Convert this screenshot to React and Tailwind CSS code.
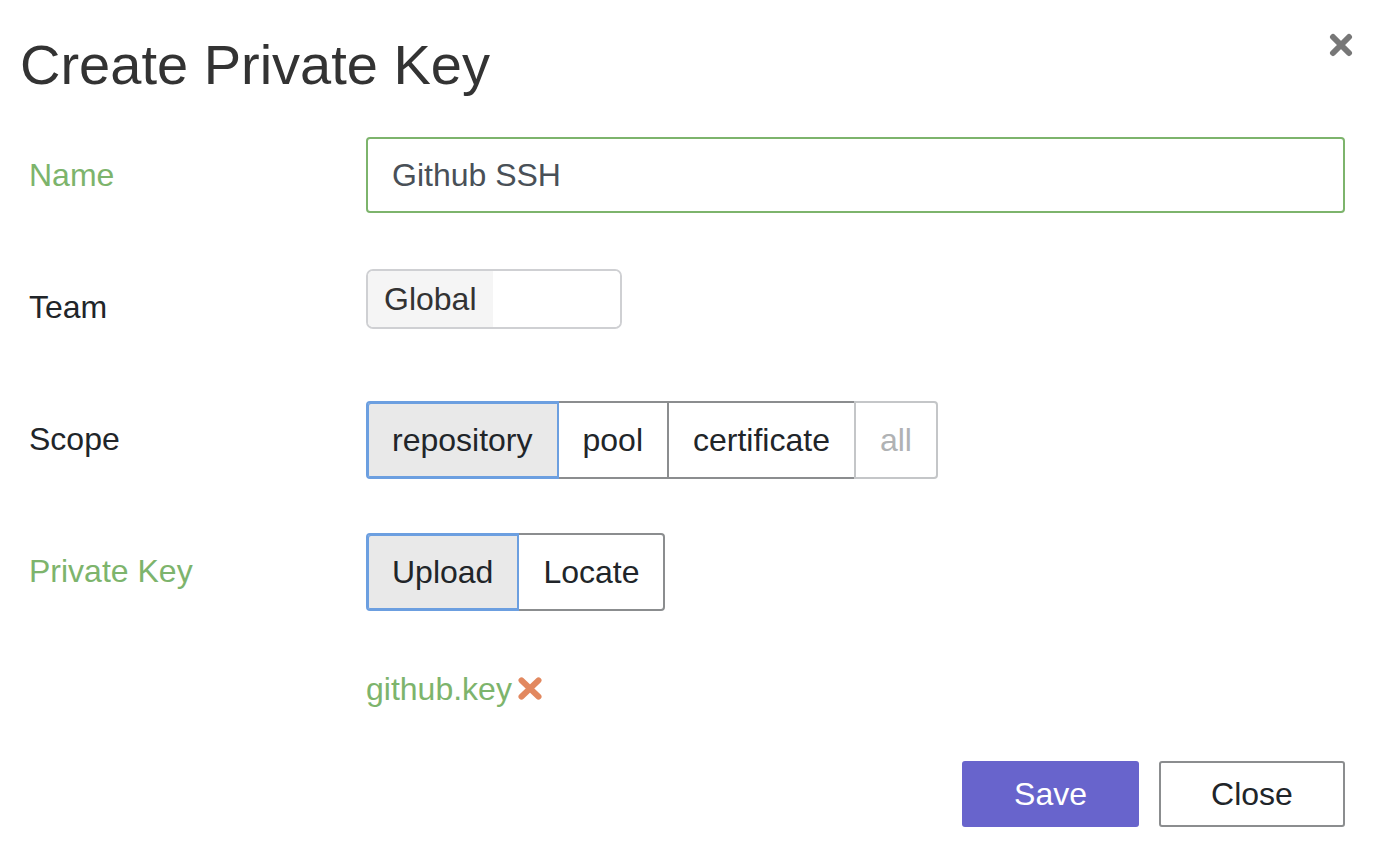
import React from 'react';

const FONT = { fontFamily: '"Liberation Sans", Arial, sans-serif' };

const XMark = ({ className, stroke = 6, d = 'M4 4 L20 20 M20 4 L4 20' }) => (
  <svg viewBox="0 0 24 24" className={className} fill="none" preserveAspectRatio="none">
    <path d={d} stroke="currentColor" strokeWidth={stroke} strokeLinecap="round" />
  </svg>
);

const Row = ({ label, green, children }) => (
  <div className="flex items-start h-[132px]">
    <div className={`w-[366px] shrink-0 pl-[29px] pt-[20px] text-[32px] leading-[36px] ${green ? 'text-[#7db46c]' : 'text-[#212529]'}`}>
      {label}
    </div>
    <div className="flex-1">{children}</div>
  </div>
);

const Group = ({ items, active, muted = [] }) => (
  <div className="flex">
    {items.map((it, i) => {
      const on = it === active;
      const first = i === 0;
      const last = i === items.length - 1;
      return (
        <button
          key={it}
          className={[
            'h-[78px] px-6 text-[32px] leading-[36px] border-2',
            first ? 'rounded-l-[4px]' : '-ml-[2px]',
            last ? 'rounded-r-[4px]' : '',
            on ? 'relative z-10 bg-[#e9e9e9] border-[#6c9fe0] shadow-[inset_1px_1px_0_#6c9fe0,inset_0_-1px_0_#6c9fe0] text-[#212529]' : 'bg-white',
            !on && muted.includes(it) ? 'border-[#c4c6c8] text-[#b0b2b4]' : '',
            !on && !muted.includes(it) ? 'border-[#8b8d8f] text-[#212529]' : '',
          ].join(' ')}
          style={FONT}
        >
          {it}
        </button>
      );
    })}
  </div>
);

export default function App() {
  return (
    <div className="relative min-h-[853px] bg-white pr-[34px] pt-[33px]" style={FONT}>
      <button className="absolute right-[26px] top-[33px] text-[#777]">
        <XMark className="w-6 h-6" stroke={6} />
      </button>

      <h1 className="pl-[20px] text-[56px] leading-[64px] text-[#333]">Create Private Key</h1>

      <div className="mt-[40px]">
        <Row label="Name" green>
          <div className="h-[76px] border-2 border-[#7db46c] rounded-[4px] flex items-center pl-[24px] text-[32px] text-[#495057]">
            Github SSH
          </div>
        </Row>

        <Row label="Team">
          <div className="w-[256px] h-[60px] border-2 border-[#cfd0d3] rounded-[7px] flex overflow-hidden">
            <div className="bg-[#f5f5f5] px-4 flex items-center text-[32px] leading-[36px] text-[#333]">Global</div>
            <div className="flex-1 bg-white" />
          </div>
        </Row>

        <Row label="Scope">
          <Group items={['repository', 'pool', 'certificate', 'all']} active="repository" muted={['all']} />
        </Row>

        <Row label="Private Key" green>
          <Group items={['Upload', 'Locate']} active="Upload" />
        </Row>

        <div className="h-[96px] pl-[366px] pt-[6px] flex items-start">
          <span className="text-[32px] leading-[36px] text-[#7db46c]">github.key</span>
          <XMark className="ml-[6px] mt-[6px] w-[24px] h-[23px] text-[#e2885f]" stroke={6} d="M3.5 3.5 L20.5 20.5 M20.5 3.5 L3.5 20.5" />
        </div>

        <div className="flex justify-end gap-5">
          <button className="w-[177px] h-[66px] bg-[#6864cc] rounded-[3px] text-white text-[32px]">Save</button>
          <button className="w-[186px] h-[66px] bg-white border-2 border-[#8b8d8f] rounded-[3px] text-[#212529] text-[32px]">Close</button>
        </div>
      </div>
    </div>
  );
}
